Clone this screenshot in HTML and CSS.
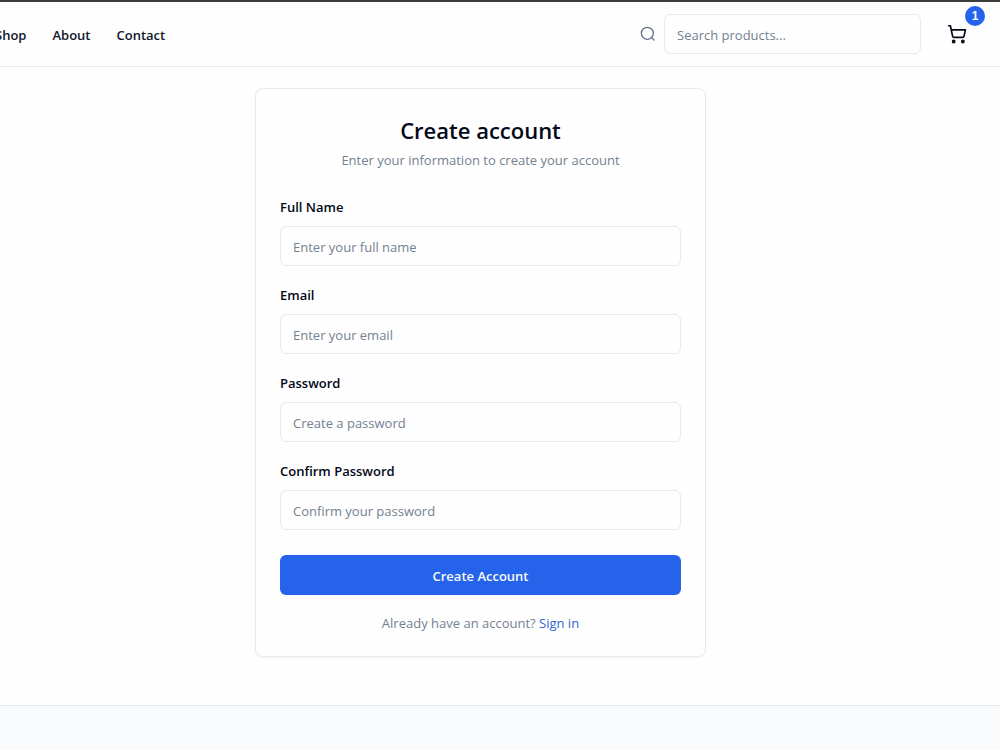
FILE: index.html
```html
<!DOCTYPE html>
<html lang="en">
<head>
    <meta charset="UTF-8">
    <meta name="viewport" content="width=device-width, initial-scale=1.0">
    <title>Create account</title>
    <link rel="stylesheet" href="styles.css">
</head>
<body>
    <header class="header">
        <nav class="nav">
            <a href="#">Shop</a>
            <a href="#">About</a>
            <a href="#">Contact</a>
        </nav>
        <div class="header-actions">
            <form class="search">
                <label for="search" aria-label="Search">
                    <svg width="16" height="16" viewBox="0 0 24 24" fill="none" stroke="currentColor" stroke-width="2" stroke-linecap="round" stroke-linejoin="round">
                        <circle cx="11" cy="11" r="9"/>
                        <path d="m21 21-3.600-3.600"/>
                    </svg>
                </label>
                <input class="input" type="search" id="search" placeholder="Search products...">
            </form>
            <button class="cart" type="button" aria-label="Cart">
                <svg width="20" height="20" viewBox="0 0 24 24" fill="none" stroke="currentColor" stroke-width="2" stroke-linecap="round" stroke-linejoin="round">
                    <circle cx="8" cy="21" r="1.300"/>
                    <circle cx="19" cy="21" r="1.300"/>
                    <path d="M2.050 2.050h2l2.660 12.420a2 2 0 0 0 2 1.580h9.780a2 2 0 0 0 1.950-1.570l1.650-7.430H5.120"/>
                </svg>
                <span class="badge">1</span>
            </button>
        </div>
    </header>

    <main class="main">
        <div class="card">
            <h1 class="title">Create account</h1>
            <p class="subtitle">Enter your information to create your account</p>

            <form class="form">
                <div class="fields">
                    <div class="field">
                        <label for="name">Full Name</label>
                        <input class="input" type="text" id="name" placeholder="Enter your full name">
                    </div>
                    <div class="field">
                        <label for="email">Email</label>
                        <input class="input" type="email" id="email" placeholder="Enter your email">
                    </div>
                    <div class="field">
                        <label for="password">Password</label>
                        <input class="input" type="password" id="password" placeholder="Create a password">
                    </div>
                    <div class="field">
                        <label for="confirm">Confirm Password</label>
                        <input class="input" type="password" id="confirm" placeholder="Confirm your password">
                    </div>
                </div>
                <button class="submit" type="submit">Create Account</button>
            </form>

            <p class="signin">Already have an account? <a href="#">Sign in</a></p>
        </div>
    </main>

    <footer class="footer"></footer>
</body>
</html>
```
FILE: styles.css
```css
* {
    box-sizing: border-box;
}

body {
    margin: 0;
    min-height: 100vh;
    display: flex;
    flex-direction: column;
    overflow: hidden;
    font-family: "Segoe UI", "Open Sans", sans-serif;
    font-size: 13px;
    line-height: 20px;
    color: #020817;
    background: #fefefe;
}

a {
    text-decoration: none;
}

/* Header */
.header {
    display: flex;
    align-items: center;
    justify-content: space-between;
    padding: 12px 23px 12px 0;
    border-top: 2px solid #3c3c3c;
    border-bottom: 1px solid #e6e9ed;
}

.nav {
    display: flex;
    gap: 26px;
    margin-left: -5px;
    padding-top: 2px;
}

.nav a {
    color: #0f172a;
    font-weight: 600;
}

.header-actions {
    display: flex;
    align-items: center;
    gap: 16px;
}

.search {
    display: flex;
    align-items: center;
    gap: 8px;
}

.search label {
    display: flex;
    color: #64748b;
}

.search .input {
    width: 257px;
}

.cart {
    position: relative;
    display: flex;
    align-items: center;
    justify-content: center;
    width: 40px;
    height: 40px;
    padding: 0;
    border: 0;
    background: none;
    color: #020817;
}

.badge {
    position: absolute;
    top: -8px;
    right: -8px;
    width: 20px;
    height: 20px;
    border-radius: 50%;
    background: #2563eb;
    color: #f8fafc;
    font-family: inherit;
    font-size: 12px;
    font-weight: 600;
    line-height: 20px;
    text-align: center;
}

/* Form controls */
.input {
    width: 100%;
    height: 40px;
    padding: 2px 12px 0;
    border: 1px solid #e6eaee;
    border-radius: 6px;
    background: transparent;
    font-family: inherit;
    font-size: 13px;
    color: #020817;
}

.input::placeholder {
    color: #74818f;
    opacity: 1;
}

/* Card */
.main {
    display: flex;
    justify-content: center;
    padding: 21px 39px 48px 0;
}

.card {
    width: 100%;
    max-width: 451px;
    padding: 24px 24px 23px;
    border: 1px solid #e6eaee;
    border-radius: 8px;
    box-shadow: 0 1px 2px rgba(0, 0, 0, 0.05);
}

.title {
    margin: 0;
    font-size: 22px;
    font-weight: 600;
    line-height: 34px;
    text-align: center;
}

.subtitle {
    margin: 0 0 24px;
    line-height: 26px;
    text-align: center;
    color: #74818f;
}

.fields {
    display: grid;
    gap: 19px;
}

.field {
    display: grid;
    gap: 9px;
}

.field label {
    font-weight: 600;
}

.submit {
    width: 100%;
    height: 40px;
    margin-top: 25px;
    padding: 2px 16px 0;
    border: 0;
    border-radius: 6px;
    background: #2563eb;
    color: #f8fafc;
    font-family: inherit;
    font-size: 13px;
    font-weight: 600;
}

.signin {
    margin: 18px 0 0;
    text-align: center;
    color: #74818f;
}

.signin a {
    color: #3565d0;
}

/* Footer */
.footer {
    flex: 1;
    border-top: 1px solid #e2e8f0;
    background: #f8fafc;
}
```
